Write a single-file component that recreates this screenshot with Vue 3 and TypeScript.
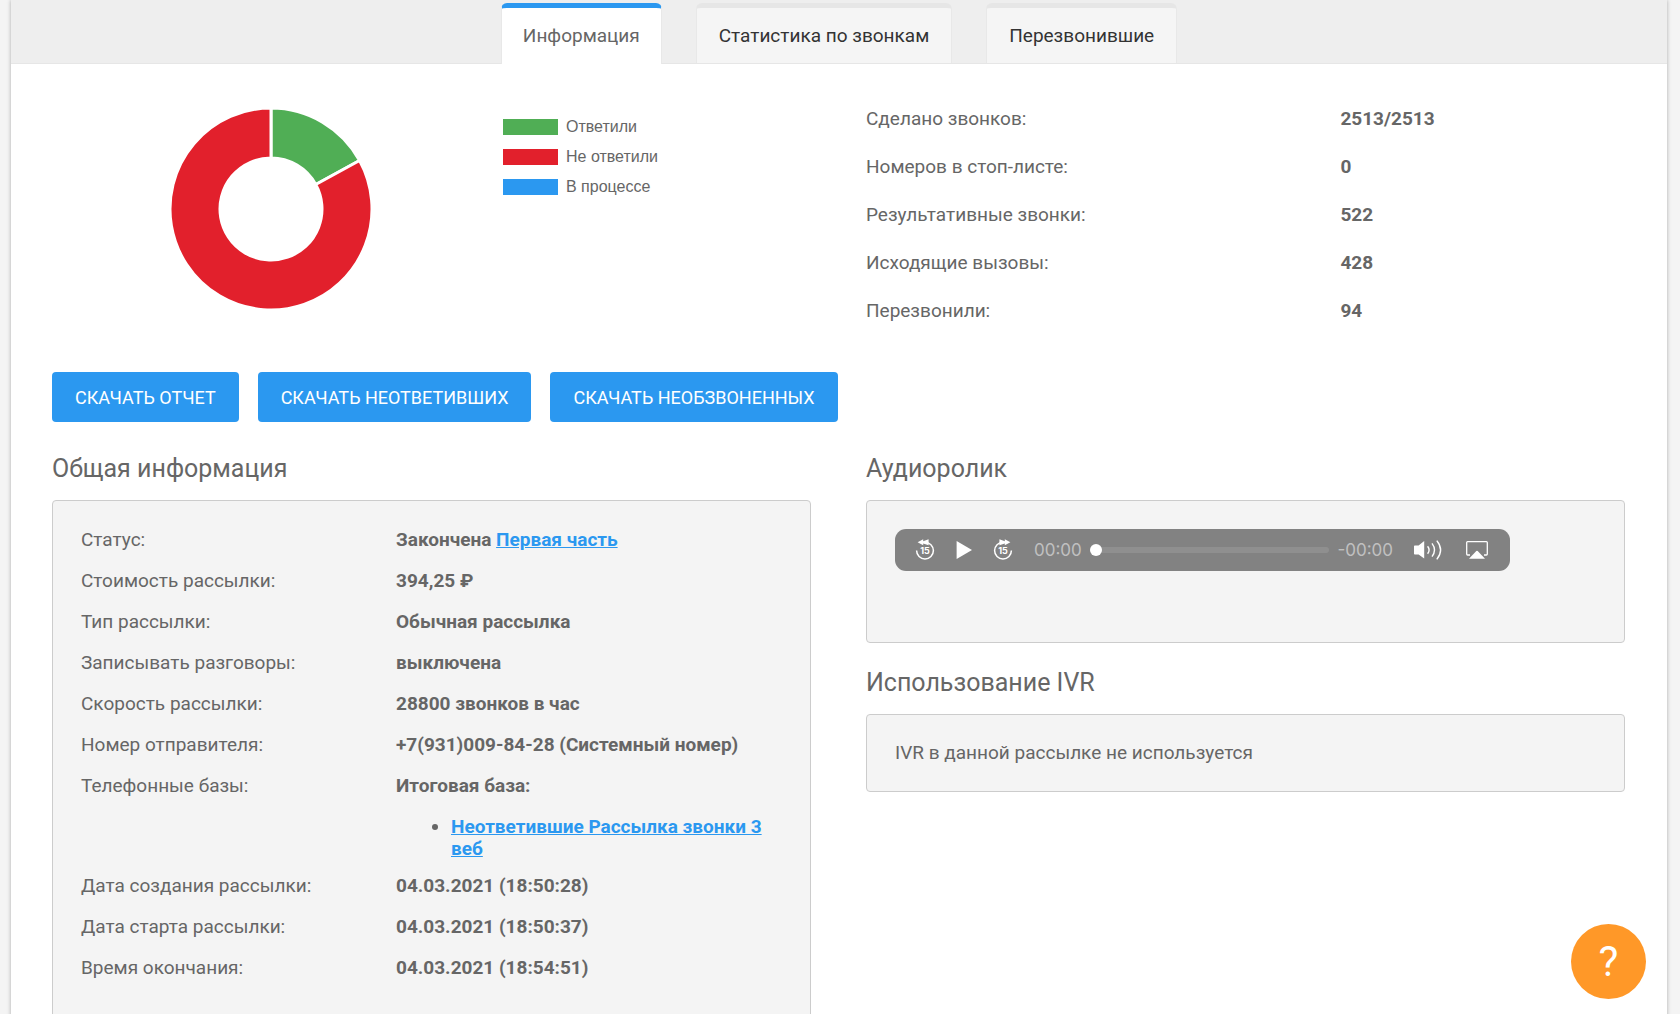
<script setup lang="ts">
import { computed, ref } from 'vue'

interface Row {
  label: string
  value: string
  link?: string
  items?: string[]
}

const tabs = ['Информация', 'Статистика по звонкам', 'Перезвонившие']
const activeTab = ref(0)
const position = ref(0)

const legend = [
  { label: 'Ответили', color: '#50ae55', count: 428 },
  { label: 'Не ответили', color: '#e2202c', count: 2085 },
  { label: 'В процессе', color: '#2b98f0', count: 0 },
]

const stats: Row[] = [
  { label: 'Сделано звонков:', value: '2513/2513' },
  { label: 'Номеров в стоп-листе:', value: '0' },
  { label: 'Результативные звонки:', value: '522' },
  { label: 'Исходящие вызовы:', value: '428' },
  { label: 'Перезвонили:', value: '94' },
]

const downloads = ['Скачать отчет', 'Скачать неответивших', 'Скачать необзвоненных']

const details: Row[] = [
  { label: 'Статус:', value: 'Закончена', link: 'Первая часть' },
  { label: 'Стоимость рассылки:', value: '394,25 ₽' },
  { label: 'Тип рассылки:', value: 'Обычная рассылка' },
  { label: 'Записывать разговоры:', value: 'выключена' },
  { label: 'Скорость рассылки:', value: '28800 звонков в час' },
  { label: 'Номер отправителя:', value: '+7(931)009-84-28 (Системный номер)' },
  { label: 'Телефонные базы:', value: 'Итоговая база:', items: ['Неответившие Рассылка звонки 3 веб'] },
  { label: 'Дата создания рассылки:', value: '04.03.2021 (18:50:28)' },
  { label: 'Дата старта рассылки:', value: '04.03.2021 (18:50:37)' },
  { label: 'Время окончания:', value: '04.03.2021 (18:54:51)' },
]

const OUTER = 101
const INNER = 51

function point(radius: number, share: number): string {
  const angle = share * 2 * Math.PI
  return `${(radius * Math.sin(angle)).toFixed(2)} ${(-radius * Math.cos(angle)).toFixed(2)}`
}

// Ring segments, clockwise from twelve o'clock
const segments = computed(() => {
  const total = legend.reduce((sum, entry) => sum + entry.count, 0)
  let start = 0
  return legend
    .filter((entry) => entry.count > 0)
    .map((entry) => {
      const from = start / total
      const to = (start + entry.count) / total
      start += entry.count
      const large = to - from > 0.5 ? 1 : 0
      return {
        color: entry.color,
        d: `M${point(OUTER, from)} A${OUTER} ${OUTER} 0 ${large} 1 ${point(OUTER, to)} L${point(INNER, to)} A${INNER} ${INNER} 0 ${large} 0 ${point(INNER, from)} Z`,
      }
    })
})
</script>

<template>
  <div class="page">
    <main class="panel">
      <nav class="tabs" role="tablist">
        <button
          v-for="(tab, index) in tabs"
          :key="tab"
          type="button"
          role="tab"
          class="tab"
          :class="{ active: index === activeTab }"
          :aria-selected="index === activeTab"
          @click="activeTab = index"
        >{{ tab }}</button>
      </nav>

      <div class="content">
        <section class="columns">
          <div class="chart">
            <svg class="donut" viewBox="-102 -102 204 204" role="img" aria-label="Ответили и не ответили">
              <path v-for="segment in segments" :key="segment.color" :d="segment.d" :fill="segment.color" stroke="#fff" stroke-width="3" />
            </svg>
            <ul class="legend">
              <li v-for="entry in legend" :key="entry.label">
                <span class="swatch" :style="{ background: entry.color }"></span>
                <span>{{ entry.label }}</span>
              </li>
            </ul>
          </div>
          <dl class="stats">
            <div v-for="row in stats" :key="row.label" class="stat">
              <dt>{{ row.label }}</dt>
              <dd>{{ row.value }}</dd>
            </div>
          </dl>
        </section>

        <div class="downloads">
          <button v-for="name in downloads" :key="name" type="button" class="download">{{ name }}</button>
        </div>

        <div class="columns">
          <section>
            <h2>Общая информация</h2>
            <div class="box">
              <dl class="details">
                <div v-for="row in details" :key="row.label" class="detail">
                  <dt>{{ row.label }}</dt>
                  <dd>
                    {{ row.value }} <a v-if="row.link" href="#">{{ row.link }}</a>
                    <ul v-if="row.items" class="bases">
                      <li v-for="item in row.items" :key="item"><a href="#">{{ item }}</a></li>
                    </ul>
                  </dd>
                </div>
              </dl>
            </div>
          </section>

          <div>
            <section>
              <h2>Аудиоролик</h2>
              <div class="box audio-box">
                <div class="player">
                  <button type="button" class="control" aria-label="Назад на 15 секунд">
                    <svg width="20" height="22" viewBox="0 0 20 22">
                      <path d="M1.6 11.6A8.4 8.4 0 1 0 10 3.2H9" fill="none" stroke="#fff" stroke-width="1.5" />
                      <path d="M2.6 3.3L8.2 .3V2.2L13.6 .3V6.3L8.2 4.4V6.3Z" fill="#fff" />
                      <text x="10" y="15" text-anchor="middle" class="skip">15</text>
                    </svg>
                  </button>
                  <button type="button" class="control" aria-label="Воспроизвести">
                    <svg width="16" height="18" viewBox="0 0 16 18"><path d="M.6 0L16 9L.6 18Z" fill="#fff" /></svg>
                  </button>
                  <button type="button" class="control" aria-label="Вперёд на 15 секунд">
                    <svg width="20" height="22" viewBox="0 0 20 22">
                      <path d="M18.4 11.6A8.4 8.4 0 1 1 10 3.2H11" fill="none" stroke="#fff" stroke-width="1.5" />
                      <path d="M17.4 3.3L11.8 .3V2.2L6.4 .3V6.3L11.8 4.4V6.3Z" fill="#fff" />
                      <text x="10" y="15" text-anchor="middle" class="skip">15</text>
                    </svg>
                  </button>
                  <span class="time">00:00</span>
                  <input v-model="position" type="range" class="seek" min="0" max="100" aria-label="Позиция воспроизведения" />
                  <span class="time">-00:00</span>
                  <button type="button" class="control volume" aria-label="Громкость">
                    <svg width="28" height="20" viewBox="0 0 28 20">
                      <path d="M0 6.2Q0 5.4 .8 5.4H4.6L10.2 1V18.6L4.6 14.6H.8Q0 14.6 0 13.8Z" fill="#fff" />
                      <path d="M13.6 6.2Q16.6 10 13.6 13.8M18 3.4Q23 10 18 16.6M22.8 .6Q30.4 10 22.8 19.4" fill="none" stroke="#fff" stroke-width="1.4" />
                    </svg>
                  </button>
                  <button type="button" class="control airplay" aria-label="AirPlay">
                    <svg width="22" height="18" viewBox="0 0 22 18">
                      <path d="M4 14H1.6Q.7 14 .7 13.1V1.6Q.7 .7 1.6 .7H20.4Q21.3 .7 21.3 1.6V13.1Q21.3 14 20.4 14H18" fill="none" stroke="#fff" stroke-width="1.3" />
                      <path d="M10.3 10.1Q11 9.4 11.7 10.1L19 17.8H3Z" fill="#fff" />
                    </svg>
                  </button>
                </div>
              </div>
            </section>

            <section class="ivr">
              <h2>Использование IVR</h2>
              <div class="box">
                <p>IVR в данной рассылке не используется</p>
              </div>
            </section>
          </div>
        </div>
      </div>
    </main>

    <button type="button" class="help" aria-label="Помощь">?</button>
  </div>
</template>

<style>
body {
  margin: 0;
  background: #f4f4f4;
}
</style>

<style scoped>
.page {
  padding: 0 13px 0 11px;
  color: #666;
  font: 19px/22px Roboto, "Liberation Sans", sans-serif;
}

button {
  margin: 0;
  border: 0;
  font-family: inherit;
  cursor: pointer;
}

dl,
dd,
ul,
p {
  margin: 0;
  padding: 0;
}

a {
  color: #2b98f0;
}

.panel {
  min-height: 100vh;
  background: #fff;
  box-shadow: 0 0 4px rgba(0, 0, 0, 0.3);
}

.tabs {
  display: flex;
  justify-content: center;
  gap: 34px;
  padding-top: 3px;
  background: #eee;
  border-bottom: 1px solid #e6e6e6;
}

.tab {
  height: 60px;
  padding: 0 22px;
  border: 1px solid #e8e8e8;
  border-top: 5px solid #e6e6e6;
  border-bottom: 0;
  border-radius: 6px 6px 0 0;
  background: #f5f5f5;
  color: #333;
  font-size: 19px;
  line-height: 22px;
}

.tab.active {
  margin-bottom: -1px;
  height: 61px;
  padding: 0 21px;
  border-top-color: #2b98f0;
  background: #fff;
  color: #666;
}

.content {
  padding: 31px 42px 48px 41px;
}

.columns {
  display: grid;
  grid-template-columns: 1fr 1fr;
  column-gap: 55px;
}

.chart {
  display: grid;
  grid-template-columns: 438fr 321fr;
  align-items: start;
}

.donut {
  width: 204px;
  height: 204px;
  margin-top: 12px;
  justify-self: center;
}

.legend {
  margin-top: 17px;
  padding-left: 13px;
  list-style: none;
  font: 16px/32px "Liberation Sans", sans-serif;
}

.legend li {
  display: flex;
  align-items: center;
  gap: 8px;
  height: 30px;
}

.swatch {
  width: 55px;
  height: 16px;
}

.stat {
  display: grid;
  grid-template-columns: 5fr 3fr;
  line-height: 48px;
}

dd {
  font-weight: 700;
}

.downloads {
  display: flex;
  flex-wrap: wrap;
  gap: 19px;
  margin: 37px 0 31px;
}

.download {
  height: 50px;
  padding: 0 23px;
  border-radius: 4px;
  background: #2b98f0;
  color: #fff;
  font-size: 18px;
  text-transform: uppercase;
}

h2 {
  margin: 0 0 15px;
  font-size: 25px;
  font-weight: 400;
  line-height: 32px;
}

.box {
  padding: 28px;
  border: 1px solid #ccc;
  border-radius: 4px;
  background: #f4f4f4;
}

.detail {
  display: grid;
  grid-template-columns: 315px 1fr;
  margin-bottom: 19px;
}

.bases {
  margin: 19px 0 -4px;
  padding-left: 55px;
}

.audio-box {
  padding-bottom: 71px;
}

.player {
  display: flex;
  align-items: center;
  box-sizing: border-box;
  max-width: 615px;
  height: 42px;
  padding: 0 22px 0 20px;
  border-radius: 11px;
  background: #828282;
}

.control {
  display: flex;
  flex: none;
  margin-right: 21px;
  padding: 0;
  background: none;
}

.skip {
  fill: #fff;
  font: 700 9px Inter, sans-serif;
}

.time {
  color: #c0c0c0;
  font: 17px/22px Inter, sans-serif;
}

.seek {
  flex: 1;
  min-width: 0;
  height: 12px;
  margin: 0 8px;
  appearance: none;
  background: none;
}

.seek::-webkit-slider-runnable-track {
  height: 6px;
  border-radius: 3px;
  background: #8f8f8f;
}

.seek::-webkit-slider-thumb {
  width: 12px;
  height: 12px;
  margin-top: -3px;
  appearance: none;
  border-radius: 50%;
  background: #fff;
}

.volume {
  margin: 0 24px 0 21px;
}

.airplay {
  margin: 0;
}

.ivr {
  margin-top: 24px;
}

.ivr p {
  line-height: 20px;
}

.help {
  position: fixed;
  right: 34px;
  bottom: 15px;
  width: 75px;
  height: 75px;
  padding: 0;
  border-radius: 50%;
  background: #ff9828;
  color: #fff;
  font-size: 42px;
  line-height: 75px;
}
</style>
